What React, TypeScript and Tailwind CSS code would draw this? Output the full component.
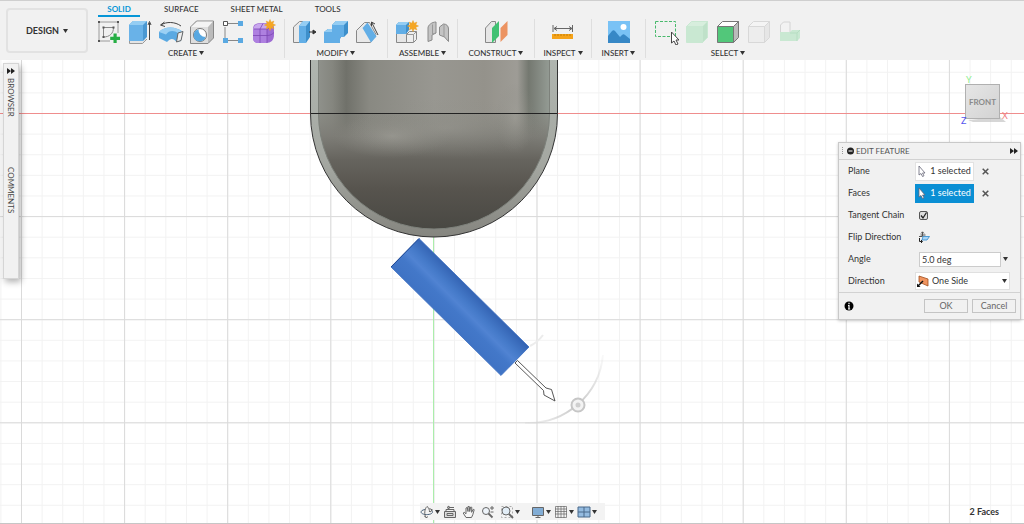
import type { ReactNode } from 'react';

const Caret = ({ className = '' }: { className?: string }) => (
  <svg viewBox="0 0 5 4" className={`h-1 w-[5px] shrink-0 ${className}`} aria-hidden="true">
    <path d="M0 0h5L2.5 4z" fill="#333" />
  </svg>
);

const Icon = ({ children }: { children: ReactNode }) => (
  <svg viewBox="0 0 26 26" className="size-[26px]" fill="none" aria-hidden="true">
    {children}
  </svg>
);

const Spark = ({ x, y }: { x: number; y: number }) => (
  <g transform={`translate(${x} ${y})`}>
    <path
      d="M0-5.5 1.2-2.8 3.9-3.9 2.8-1.2 5.5 0 2.8 1.2 3.9 3.9 1.2 2.8 0 5.5-1.2 2.8-3.9 3.9-2.8 1.2-5.5 0-2.8-1.2-3.9-3.9-1.2-2.8z"
      fill="#f5a623"
      stroke="#e9a02c"
      strokeWidth=".5"
    />
  </g>
);

const SketchIcon = () => (
  <Icon>
    <path d="M3 3h19v11M3 3v19h11" stroke="#9a9a9a" strokeWidth="1" />
    <path d="M7.500 8.500h10c0 6-4 9.500-10 9.500z" stroke="#888" />
    <path d="M2 2h2v2H2zM21 2h2v2h-2zM2 21h2v2H2zM6.500 7.500h2v2h-2zM16.500 7.500h2v2h-2zM6.500 17h2v2h-2z" fill="#555" />
    <path d="M17.500 14.500h3.200v3.200H24v3.200h-3.300V24h-3.200v-3.100h-3.300v-3.200h3.300z" fill="#27ae45" />
  </Icon>
);

const ExtrudeIcon = () => (
  <Icon>
    <path d="M2.500 20v4.500h13l4.500-4.500" fill="#e4e4e4" stroke="#999" />
    <path d="M2 6l4-4h14v16l-4 4H2z" fill="#4a98d2" />
    <path d="M2 6h14v16H2z" fill="#69b2e8" />
    <path d="M2 6l4-4h14l-4 4z" fill="#94cdf3" />
    <path d="M22.500 21V4M21 6l1.500-3.500L24 6" stroke="#444" />
  </Icon>
);

const RevolveIcon = () => (
  <Icon>
    <path d="M3 6c5-3.500 14-3.500 20 1M6.500 3L2.500 6l4.500 1.500" stroke="#444" />
    <path d="M1 13c5-6 17-6 24 0l-2 9-4.500 1c-3-4-6-4-9.500 0l-8-4z" fill="#5aa9e2" />
    <path d="M1 13c5-6 17-6 24 0l-5 1c-4-3-9-3-12 1.500z" fill="#9bd0f4" />
    <path d="M20 14l5-1.500-2 9-4.500 1.500z" fill="#eee" stroke="#666" />
  </Icon>
);

const HoleIcon = () => (
  <Icon>
    <path d="M1.500 8l6-6h17v17l-5.500 5.500H1.500z" fill="#bbb" stroke="#888" />
    <path d="M2 8h17v16H2z" fill="#dedede" />
    <path d="M2 8l6-5.500h16L19 8z" fill="#f4f4f4" />
    <circle cx="11" cy="16" r="6.500" fill="#fff" stroke="#777" />
    <path d="M9.500 10.500a6 6 0 1 0 7 7.500 7 7 0 0 1-7-7.500z" fill="#58a8e1" />
  </Icon>
);

const PatternIcon = () => (
  <Icon>
    <path d="M5 8v12M8 4.500h10M8 21.500h10" stroke="#888" />
    <path d="M3.500 2.500h4v4h-4z" fill="#fff" stroke="#555" />
    <path d="M18 2h5v5h-5zM3 19h5v5H3zM18 19h5v5h-5z" fill="#5aa9e2" />
  </Icon>
);

const FormIcon = () => (
  <Icon>
    <path d="M2 10c0-4 3-6 7-6h8c4 0 6 2 6 5v7c0 5-3 8-8 8H7c-3 0-5-2-5-5z" fill="#9e6bd3" />
    <path d="M2.500 10c0-3 3-5.500 7-5.500h10l-3 5.500z" fill="#c9a8ee" />
    <path d="M2 10h14v14H7c-3 0-5-2-5-5z" fill="#ae80e0" />
    <path d="M9 10v14M2 16.500h14c3 0 5-1 7-3M16 10v14M9 10l3-5.500M3 10h13l6-2" stroke="#7c46b4" strokeWidth=".8" />
    <Spark x={19} y={6} />
  </Icon>
);

const PressPullIcon = () => (
  <Icon>
    <path d="M1.500 8l6-5.500H13v21H1.500z" fill="#e9e9e9" stroke="#888" />
    <path d="M7 7l4-5h7v16l-4 6H7z" fill="#3d8fcb" />
    <path d="M7 7h7v17H7z" fill="#62aee6" />
    <path d="M7 7l4-5h7l-4 5z" fill="#94cdf3" />
    <path d="M17 13h5M21 11l3 2-3 2z" stroke="#333" fill="#333" />
  </Icon>
);

const CombineIcon = () => (
  <Icon>
    <path d="M9 6l4-4h12v12l-4 4h-3l-1 2-4 4H1V13l4-3h4z" fill="#3d8fcb" />
    <path d="M9 6h12v12h-4v6H1V13h8z" fill="#62aee6" />
    <path d="M9 6l4-4h12l-4 4zM1 13l4-3h4v3z" fill="#94cdf3" />
  </Icon>
);

const ChamferIcon = () => (
  <Icon>
    <path d="M2.500 11.500l8-8h5l6.500 12-5.500 8h-14z" fill="#e9e9e9" stroke="#888" />
    <path d="M8.500 9l5-5.500 9 14-5.500 6z" fill="#62aee6" />
    <path d="M18 4l6 12M17.500 7V3l3.500 2" stroke="#444" />
  </Icon>
);

const ComponentIcon = () => (
  <Icon>
    <path d="M2.500 14.500h10v9h-10z" fill="#e6e6e6" stroke="#888" />
    <path d="M12.500 15.500l3-3h7v8l-3 3h-7z" fill="#eee" stroke="#888" />
    <path d="M12.500 15.500h7l3-3M19.500 15.500v8" stroke="#999" />
    <path d="M2 6l3-3h10v8l-3 4H2z" fill="#3d8fcb" />
    <path d="M2 6h10v9H2z" fill="#62aee6" />
    <path d="M2 6l3-3h10l-3 3z" fill="#94cdf3" />
    <Spark x={19} y={7} />
  </Icon>
);

const JointIcon = () => (
  <Icon>
    <path d="M3 22.500V9c0-3 4-6 8-6v11l-4 2v5z" fill="#c4c4c4" stroke="#8a8a8a" />
    <path d="M7.500 5.500V15l3.500-1" stroke="#999" />
    <path d="M23.500 22.500V10c0-3-2-5-5-5l-4 3v8l5 2z" fill="#c4c4c4" stroke="#8a8a8a" />
    <path d="M19 5.500V18" stroke="#999" />
  </Icon>
);

const PlaneIcon = () => (
  <Icon>
    <path d="M2.500 9l6-6.500h4v21h-10z" fill="#e6e6e6" stroke="#888" />
    <path d="M9 9l7-7v15l-7 7z" fill="#40c173" />
    <path d="M17.500 9l7-7v14l-7 7z" fill="#ec9361" />
  </Icon>
);

const MeasureIcon = () => (
  <Icon>
    <path d="M3 6v7M22.500 6v7M4 9.500h18M7 7.500l-3 2 3 2M19 7.500l3 2-3 2" stroke="#666" />
    <path d="M2 15h21v5H2z" fill="#f5a31a" />
    <path d="M5 15v2M8 15v2M11 15v2M14 15v2M17 15v2M20 15v2" stroke="#c47d00" />
  </Icon>
);

const ImageIcon = () => (
  <Icon>
    <path d="M2 2h22v22H2z" fill="#79c2f5" />
    <path d="M2 17l4-5c1-1 2-1 3 0l5 6 2-2c1-1 2-1 3 0l5 4v4H2z" fill="#3788c6" />
    <circle cx="17.500" cy="8" r="3" fill="#fff" />
  </Icon>
);

const SelectIcon = () => (
  <Icon>
    <path d="M2.500 2.500h20v15h-20z" stroke="#49b96d" strokeDasharray="3 1.500" />
    <path d="M18.500 13v11l2.500-2 2 4 2-1-2-4h3z" fill="#fff" stroke="#444" />
  </Icon>
);

const Box = ({ front, top, side, stroke }: { front: string; top: string; side: string; stroke: string }) => (
  <Icon>
    <path d="M2.500 7.500h16v16h-16z" fill={front} stroke={stroke} />
    <path d="M2.500 7.500l5-5h16l-5 5z" fill={top} stroke={stroke} />
    <path d="M18.500 7.500l5-5v16l-5 5z" fill={side} stroke={stroke} />
  </Icon>
);

const BodyPartIcon = () => (
  <Icon>
    <path d="M3.500 6l3-3h6.500v11H3.500z" fill="#f2f2f2" stroke="#d4d4d4" />
    <path d="M3 13h10l2-2h8v8l-3 3H3z" fill="#c9e8d2" />
    <path d="M13 14h7l3-3M20 14v8" stroke="#b6ddc2" />
  </Icon>
);

type Tool = { name: string; icon: ReactNode };
type Group = { label: string; width: string; tools: Tool[] };

const groups: Group[] = [
  {
    label: 'CREATE',
    width: 'w-[197px]',
    tools: [
      { name: 'Create sketch', icon: <SketchIcon /> },
      { name: 'Extrude', icon: <ExtrudeIcon /> },
      { name: 'Revolve', icon: <RevolveIcon /> },
      { name: 'Hole', icon: <HoleIcon /> },
      { name: 'Pattern', icon: <PatternIcon /> },
      { name: 'Create form', icon: <FormIcon /> },
    ],
  },
  {
    label: 'MODIFY',
    width: 'w-[103px]',
    tools: [
      { name: 'Press pull', icon: <PressPullIcon /> },
      { name: 'Combine', icon: <CombineIcon /> },
      { name: 'Chamfer', icon: <ChamferIcon /> },
    ],
  },
  {
    label: 'ASSEMBLE',
    width: 'w-[70px]',
    tools: [
      { name: 'New component', icon: <ComponentIcon /> },
      { name: 'Joint', icon: <JointIcon /> },
    ],
  },
  { label: 'CONSTRUCT', width: 'w-[77px]', tools: [{ name: 'Offset plane', icon: <PlaneIcon /> }] },
  { label: 'INSPECT', width: 'w-[57px]', tools: [{ name: 'Measure', icon: <MeasureIcon /> }] },
  { label: 'INSERT', width: 'w-[54px]', tools: [{ name: 'Canvas', icon: <ImageIcon /> }] },
  {
    label: 'SELECT',
    width: 'w-[164px]',
    tools: [
      { name: 'Window select', icon: <SelectIcon /> },
      { name: 'Bodies', icon: <Box front="#c9e8d2" top="#d7eedd" side="#bfe1c9" stroke="#c9e8d2" /> },
      { name: 'Faces', icon: <Box front="#52c77a" top="#fff" side="#bbb" stroke="#777" /> },
      { name: 'Edges', icon: <Box front="#ededed" top="#f4f4f4" side="#e6e6e6" stroke="#d8d8d8" /> },
      { name: 'Components', icon: <BodyPartIcon /> },
    ],
  },
];

const Toolbar = () => (
  <header className="flex h-[60px] shrink-0 border-t border-[#cfcfcf] bg-[#f1f1f1] text-[8px] leading-3 font-medium text-[#333]">
    <button className="mt-[7px] ml-[6px] flex h-[45px] w-[82px] shrink-0 items-center justify-center gap-1 rounded border-2 border-[#e2e2e2] text-[9px] font-bold">
      DESIGN <Caret />
    </button>
    <div className="flex flex-col">
      <nav className="flex h-4 pl-[10px]">
        <a href="#solid" className="w-[42px] border-b-2 border-[#0696d7] pt-[2px] text-center font-bold text-[#0696d7]">
          SOLID
        </a>
        <a href="#surface" className="ml-6 pt-[2px]">SURFACE</a>
        <a href="#sheet" className="ml-8 pt-[2px]">SHEET METAL</a>
        <a href="#tools" className="ml-8 pt-[2px]">TOOLS</a>
      </nav>
      <div className="flex pt-[2px]">
        {groups.map((group) => (
          <section
            key={group.label}
            className={`flex h-[39px] shrink-0 flex-col items-center border-r border-[#dedede] last:border-r-0 ${group.width}`}
          >
            <div className="flex">
              {group.tools.map((tool) => (
                <button key={tool.name} aria-label={tool.name} className="flex w-[31px] justify-center">
                  {tool.icon}
                </button>
              ))}
            </div>
            <button className="mt-[2px] flex items-center gap-[2px]">
              {group.label} <Caret />
            </button>
          </section>
        ))}
      </div>
    </div>
  </header>
);

const Scene = () => (
  <svg
    viewBox="0 60 1024 464"
    preserveAspectRatio="xMidYMin slice"
    className="absolute inset-0 size-full"
    aria-hidden="true"
  >
    <defs>
      <pattern id="minor" x="21" y="113" width="20.620" height="20.620" patternUnits="userSpaceOnUse">
        <path d="M.5 0v21M0 .5h21" stroke="#f2f2f2" fill="none" />
      </pattern>
      <pattern id="major" x="21" y="113" width="103.100" height="103.100" patternUnits="userSpaceOnUse">
        <path d="M.5 0v104M0 .5h104" stroke="#dadada" fill="none" />
      </pattern>
      <linearGradient id="wall" x1="0" x2="1" y1="0" y2="0">
        <stop offset="0" stopColor="#8f918b" />
        <stop offset=".06" stopColor="#85867f" />
        <stop offset=".12" stopColor="#70716a" />
        <stop offset=".22" stopColor="#898982" />
        <stop offset=".5" stopColor="#989791" />
        <stop offset=".72" stopColor="#94928b" />
        <stop offset=".86" stopColor="#9e9c96" />
        <stop offset=".91" stopColor="#747870" />
        <stop offset="1" stopColor="#949b94" />
      </linearGradient>
      <linearGradient id="dome" x1="0" x2="0" y1="0" y2="1">
        <stop offset="0" stopColor="#84847d" stopOpacity=".4" />
        <stop offset=".2" stopColor="#7c7b75" stopOpacity=".9" />
        <stop offset=".4" stopColor="#66645e" />
        <stop offset=".65" stopColor="#57544e" />
        <stop offset="1" stopColor="#494843" />
      </linearGradient>
      <linearGradient id="rim" x1="0" x2="0" y1="0" y2="1">
        <stop offset="0" stopColor="#b0b6b0" />
        <stop offset=".6" stopColor="#a4a7a1" />
        <stop offset="1" stopColor="#85857f" />
      </linearGradient>
      <radialGradient id="glow">
        <stop offset="0" stopColor="#a09f98" stopOpacity=".7" />
        <stop offset="1" stopColor="#8b8b84" stopOpacity="0" />
      </radialGradient>
      <linearGradient id="pin" gradientUnits="userSpaceOnUse" x1="446" y1="321" x2="474" y2="293">
        <stop offset="0" stopColor="#3f73c4" />
        <stop offset=".35" stopColor="#4378c9" />
        <stop offset=".52" stopColor="#5083d2" />
        <stop offset=".7" stopColor="#457ac9" />
        <stop offset="1" stopColor="#3464b4" />
      </linearGradient>
      <linearGradient id="arc" gradientUnits="userSpaceOnUse" x1="525" y1="423" x2="603" y2="355">
        <stop offset="0" stopColor="#ccc" stopOpacity=".2" />
        <stop offset=".5" stopColor="#c8c8c8" />
        <stop offset="1" stopColor="#ccc" stopOpacity=".1" />
      </linearGradient>
    </defs>

    <rect y="60" width="1024" height="464" fill="#fff" />
    <rect y="60" width="1024" height="464" fill="url(#minor)" />
    <rect y="60" width="1024" height="464" fill="url(#major)" />
    <path d="M0 113.500h1024" stroke="#ef8d8d" />
    <path d="M433.500 113v411" stroke="#abeeab" />

    {/* capsule body */}
    <path d="M310.500 55v58.500a123.500 123.500 0 0 0 247 0V55z" fill="url(#rim)" stroke="#333" />
    <path d="M318.500 55v58.500a115.500 115.500 0 0 0 231 0V55z" fill="url(#wall)" />
    <path d="M318.500 113.500a115.500 115.500 0 0 0 231 0z" fill="url(#dome)" />
    <ellipse cx="392" cy="136" rx="60" ry="22" fill="url(#glow)" />
    <ellipse cx="446" cy="128" rx="100" ry="30" fill="url(#glow)" opacity=".6" />
    <ellipse cx="515" cy="118" rx="20" ry="36" fill="url(#glow)" opacity=".8" />
    <path d="M318.500 55v58.500a115.500 115.500 0 0 0 231 0V55" stroke="#7d817b" fill="none" />
    <path d="M310.500 113.500h247" stroke="#222" />

    {/* selected pin */}
    <path d="M419 238.500L391 267l110 108.500L529 347z" fill="url(#pin)" stroke="#3a6dc2" strokeWidth=".8" />
    <path d="M391 267l28-28.500" stroke="#1f4894" />

    {/* rotation manipulator */}
    <path d="M530 346q8-4 13-11" stroke="#ececec" strokeWidth="2" fill="none" />
    <path d="M525 423a75 75 0 0 0 78-68" stroke="url(#arc)" strokeWidth="2" fill="none" />
    <circle cx="578" cy="405" r="6.500" fill="#f3f3f3" stroke="#c6c6c6" strokeWidth="2" />
    <circle cx="578" cy="405" r="2.500" fill="#cfcfcf" />
    <path d="M517.500 360.500L546 388l5.500 1.500L555 401l-11-6-.5-4.500L515 363z" fill="#fff" stroke="#444" strokeWidth=".9" />
    <path d="M0 523.500h1024" stroke="#c6c6c6" />
  </svg>
);

const FastForward = () => (
  <svg viewBox="0 0 8 6" className="h-[6px] w-2" aria-hidden="true">
    <path d="M0 0l4 3-4 3zM4 0l4 3-4 3z" fill="#222" />
  </svg>
);

const SideTabs = () => (
  <aside className="mt-[3px] ml-[3px] flex h-[216px] w-4 flex-col items-center border border-[#d5d5d5] bg-[#f1f1f1] text-[8px] leading-3 text-[#444] shadow-[2px_3px_6px_rgba(0,0,0,0.3)]">
    <button aria-label="Expand" className="flex h-[14px] items-center">
      <FastForward />
    </button>
    <button className="h-9 text-left [writing-mode:vertical-rl]">BROWSER</button>
    <button className="mt-[53px] text-left [writing-mode:vertical-rl]">COMMENTS</button>
  </aside>
);

const ViewCube = () => (
  <svg viewBox="0 0 52 54" className="mr-[8px] h-[54px] w-[52px] self-end" role="img" aria-label="View cube">
    <defs>
      <linearGradient id="cube" x1="0" x2="1" y1="0" y2="1">
        <stop offset="0" stopColor="#e6e6e6" />
        <stop offset="1" stopColor="#d2d2d2" />
      </linearGradient>
    </defs>
    <g fontFamily="Lato, sans-serif" fontSize="9">
      <text x="5" y="9" fill="#8dee8d">Y</text>
      <path d="M7 46l5 2h33l-6-5z" fill="#bbb" opacity=".6" />
      <rect x="4.500" y="10.500" width="34" height="34" fill="url(#cube)" stroke="#b0b0b0" />
      <text x="21.500" y="31" textAnchor="middle" fill="#8a8a8a" fontSize="8" fontWeight="700">
        FRONT
      </text>
      <text x="0" y="50" fill="#5656ee">Z</text>
      <text x="41" y="45" fill="#f08080">X</text>
    </g>
  </svg>
);

const Cursor = () => (
  <svg viewBox="0 0 8 12" className="h-3 w-2 shrink-0" aria-hidden="true">
    <path d="M1 1v9l2-1.500L4.500 11.500l1.500-.7-1.500-2.800H7z" fill="#fff" stroke="#667" strokeWidth=".8" />
  </svg>
);

const SelectionRow = ({ label, active = false }: { label: string; active?: boolean }) => (
  <div className="flex h-[22px] items-center">
    <span className="w-[67px]">{label}</span>
    <button
      type="button"
      className={`flex h-[19px] w-[59px] items-center justify-center gap-1 border ${
        active ? 'border-[#0a8fd4] bg-[#0a8fd4] text-white' : 'border-[#e2e2e2] bg-white'
      }`}
    >
      <Cursor />1 selected
    </button>
    <button type="button" aria-label={`Clear ${label}`} className="ml-2">
      <svg viewBox="0 0 7 7" className="size-[7px]" aria-hidden="true">
        <path d="M.7.700l5.600 5.600M6.300.700L.7 6.300" stroke="#555" strokeWidth="1.500" />
      </svg>
    </button>
  </div>
);

const FeaturePanel = () => (
  <form className="mt-[14px] w-[183px] border border-[#c9c9c9] bg-[#f1f1f1] text-[9px] leading-3 text-[#333] shadow-[0_1px_3px_rgba(0,0,0,0.2)]">
    <div className="flex h-[17px] items-center border-b border-[#d2d2d2] pr-[2px] pl-[2px] text-[#555]">
      <svg viewBox="0 0 14 10" className="mr-px h-[10px] w-[14px]" aria-hidden="true">
        <path d="M1.500 1v8" stroke="#999" strokeDasharray="1 1" />
        <circle cx="9.500" cy="5" r="3.500" fill="#222" />
        <path d="M7.500 5h4" stroke="#fff" />
      </svg>
      <h2 className="grow text-[8px]">EDIT FEATURE</h2>
      <FastForward />
    </div>
    <div className="pl-[9px]">
      <SelectionRow label="Plane" />
      <SelectionRow label="Faces" active />
      <div className="flex h-[22px] items-center">
        <label htmlFor="tangent" className="w-[71px]">Tangent Chain</label>
        <span className="relative flex">
          <input
            id="tangent"
            type="checkbox"
            defaultChecked
            className="peer size-[9px] appearance-none rounded-[2px] border border-[#555] bg-[#ddd]"
          />
          <svg viewBox="0 0 9 9" className="pointer-events-none absolute inset-0 hidden size-[9px] peer-checked:block" aria-hidden="true">
            <path d="M2 4.500l2 2.500 3.500-5.500" stroke="#222" strokeWidth="1.300" fill="none" />
          </svg>
        </span>
      </div>
      <div className="flex h-[22px] items-center">
        <span className="w-[70px]">Flip Direction</span>
        <button type="button" aria-label="Flip direction">
          <svg viewBox="0 0 12 12" className="size-3" fill="none" aria-hidden="true">
            <path d="M1 5.500h3.500V1M3 2.500L4.500.8 6 2.500M2.500 4h5" stroke="#555" />
            <path d="M5 5.500h6.500L9 9H4z" fill="#a9d5f5" stroke="#2f88cc" strokeWidth=".8" />
            <path d="M1.500 7v3.500H4M3 9l1.500 1.500L3 12" stroke="#222" />
          </svg>
        </button>
      </div>
      <div className="flex h-[22px] items-center">
        <label htmlFor="angle" className="w-[71px]">Angle</label>
        <input id="angle" defaultValue="5.0 deg" className="h-[15px] w-[82px] border border-[#ccc] bg-white px-[2px]" />
        <Caret className="ml-[2px]" />
      </div>
      <div className="flex h-[22px] items-center">
        <label htmlFor="direction" className="w-[67px]">Direction</label>
        <span className="relative flex items-center">
          <select
            id="direction"
            className="h-[18px] w-[95px] appearance-none border border-[#e0e0e0] bg-white pl-4"
          >
            <option>One Side</option>
            <option>Symmetric</option>
          </select>
          <svg viewBox="0 0 12 12" className="pointer-events-none absolute left-[2px] size-3" aria-hidden="true">
            <path d="M2 1l9 3v7L2 7z" fill="#f0945f" stroke="#a04f20" strokeWidth=".8" />
            <path d="M1 11l5-5" stroke="#111" strokeWidth="1.500" />
            <path d="M0 12V8.500L3.500 12z" fill="#111" />
          </svg>
          <Caret className="pointer-events-none absolute right-[3px]" />
        </span>
      </div>
    </div>
    <div className="flex h-[27px] items-center border-t border-[#d2d2d2] pr-1 pl-[5px]">
      <svg viewBox="0 0 10 10" className="mr-auto size-[10px]" role="img" aria-label="Info">
        <circle cx="5" cy="5" r="4.500" fill="#000" />
        <path d="M5 1.800v1.400M4 4.500h1V8M4 8h2.200" stroke="#fff" strokeWidth="1.200" fill="none" />
      </svg>
      <button type="button" className="h-[14px] w-11 border border-[#c4c4c4] text-[#666]">OK</button>
      <button type="button" className="ml-1 h-[14px] w-11 border border-[#c4c4c4] text-[#666]">Cancel</button>
    </div>
  </form>
);

const navTools = [
  {
    name: 'Orbit',
    menu: true,
    art: (
      <>
        <path d="M5 4.500C2 5 .8 6.200 1.200 7.500c.8 2 6 2.700 9.300 1.500 2.500-1 2.700-2.600.5-3.700" stroke="#48617a" />
        <path d="M6 12.500C4 10 4.500 3.500 7 1.500c2 1 2.500 3.500 2.500 5.500M9.500 3.500L12.500 5l-2.500 2M4.500 11l1.500 1.700 2-1" />
      </>
    ),
  },
  {
    name: 'Look at',
    menu: false,
    art: (
      <>
        <path d="M1.500 6.500h11v6h-11zM4 8.500h6v2H4z" fill="#ddd" />
        <path d="M3 6V4.500h8V6M4 2.500L6 1v3zM6 2.500h5" />
      </>
    ),
  },
  {
    name: 'Pan',
    menu: false,
    art: <path d="M4 12.500L1.200 8l1-.7 1.800 1.500V3l1.300-.5L6 6.500v-5h1.300l.4 5 1-4.500 1.100.3-.2 5 1.600-3 1 .4-1.400 5-1.300 2.800z" fill="#f6f6f6" />,
  },
  {
    name: 'Zoom',
    menu: false,
    art: (
      <>
        <circle cx="5" cy="6" r="3.500" fill="#eef4fa" />
        <path d="M7.500 8.500l4 4" strokeWidth="1.800" />
        <path d="M9 3h4M11 1v4M9.500 7h3" />
      </>
    ),
  },
  {
    name: 'Fit',
    menu: true,
    art: (
      <>
        <path d="M1.500 1.500h11v11h-11z" strokeDasharray="2 2" stroke="#aaa" />
        <circle cx="6" cy="6" r="4" fill="#e2edf6" />
        <path d="M9 9l4 4" strokeWidth="1.800" />
      </>
    ),
  },
  {
    name: 'Display settings',
    menu: true,
    art: (
      <>
        <path d="M1.500 2.500h11v8h-11z" fill="#82add5" />
        <path d="M4.500 12.500h5M7 10.500v2" />
      </>
    ),
  },
  {
    name: 'Grid and snaps',
    menu: true,
    art: <path d="M1.500 1.500h11v11h-11zM1 4h12M1 6.500h12M1 9h12M4 1v12M7 1v12M10 1v12" strokeWidth=".7" />,
  },
  {
    name: 'Viewports',
    menu: true,
    art: <path d="M1 2h12v10H1zM7 2v10M1 7h12" fill="#94bbe0" stroke="#49688a" />,
  },
];

const NavBar = () => (
  <nav aria-label="Navigation" className="flex h-[17px] w-[185px] items-center bg-[#f3f3f3]">
    {navTools.map((tool) => (
      <button
        key={tool.name}
        aria-label={tool.name}
        className={`flex items-center gap-px ${tool.name === 'Display settings' ? 'ml-2' : ''} ${
          tool.menu ? 'w-[23px]' : 'w-[19px]'
        }`}
      >
        <svg viewBox="0 0 14 14" className="size-[14px] shrink-0" fill="none" stroke="#666" aria-hidden="true">
          {tool.art}
        </svg>
        {tool.menu && <Caret />}
      </button>
    ))}
  </nav>
);

export default function App() {
  return (
    <div className="flex min-h-screen flex-col overflow-hidden font-['Lato',sans-serif]">
      <Toolbar />
      <main className="relative flex grow flex-col">
        <Scene />
        <div className="relative flex items-start justify-between">
          <SideTabs />
          <div className="mt-[14px] mr-[3px] flex flex-col">
            <ViewCube />
            <FeaturePanel />
          </div>
        </div>
        <div className="relative mt-auto mb-1 grid grid-cols-[1fr_auto_1fr] items-center">
          <p className="col-start-3 row-start-1 pr-[25px] text-right text-[9px] leading-3 font-bold text-[#333]">2 Faces</p>
          <div className="col-start-2 row-start-1">
            <NavBar />
          </div>
        </div>
      </main>
    </div>
  );
}
